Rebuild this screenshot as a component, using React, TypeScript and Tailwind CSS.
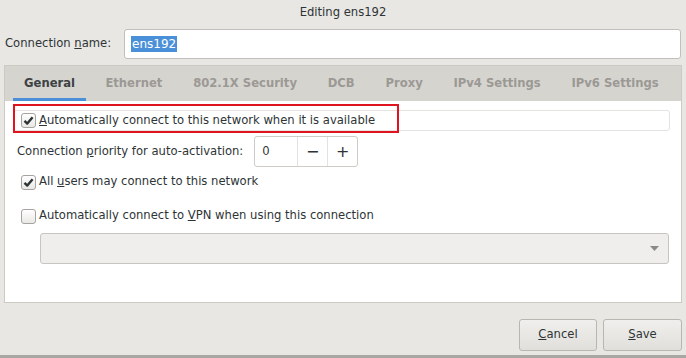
import React from "react";

function Check({ on }: { on: boolean }) {
  return (
    <span className="flex h-[15px] w-[15px] shrink-0 items-center justify-center rounded-[3px] border border-[#a7a49f] bg-gradient-to-b from-white to-[#e9e8e6]">
      {on && (
        <svg width="11" height="11" viewBox="0 0 11 11">
          <path d="M1.5 5.8 L4.3 8.6 L9.6 2.2" fill="none" stroke="#2e3436" strokeWidth="2.4" strokeLinejoin="round" />
        </svg>
      )}
    </span>
  );
}

const tabs = ["Ethernet", "802.1X Security", "DCB", "Proxy", "IPv4 Settings", "IPv6 Settings"];

export default function App() {
  return (
    <div
      className="flex h-[358px] w-[686px] flex-col border-b-[3px] border-[#a9a7a3] bg-[#e8e7e3] text-[11.6px] text-[#2e3436]"
      style={{ fontFamily: '"DejaVu Sans", sans-serif' }}
    >
      <div className="flex h-[26px] items-center justify-center text-[#2e3436]">Editing ens192</div>

      <div className="mt-[3px] flex h-[30px] items-center pl-[5px] pr-[5px]">
        <span className="w-[119px]">
          Connection <span className="underline">n</span>ame:
        </span>
        <div className="flex h-[30px] flex-1 items-center rounded-[3px] border border-[#c3c0bb] bg-white pl-[6px]">
          <span className="bg-[#4a90d9] px-[1px] text-[12px] leading-[16px] text-white">ens192</span>
        </div>
      </div>

      <div className="mx-[4px] mt-[6px] flex flex-col border border-[#cdcac4]">
        <div className="flex h-[35px] items-stretch whitespace-nowrap bg-[#d6d4cf] font-bold text-[#9b9995]">
          <div className="flex flex-col pl-[8px] pr-[4px]">
            <div className="flex flex-1 items-center border-b-[3px] border-[#4a90d9] px-[11px] pt-[3px] text-[#3d4244]">
              General
            </div>
          </div>
          {tabs.map((t) => (
            <div key={t} className="flex items-center px-[15.4px] pt-[1px]">
              {t}
            </div>
          ))}
        </div>

        <div className="relative flex h-[201px] flex-col bg-white">
          <div className="absolute left-[8px] top-[3px] h-[29px] w-[386px] border-2 border-[#e0141e]" />

          <div className="ml-[8px] mr-[11px] mt-[9px] flex h-[21px] items-center rounded-[3px] border border-[#e4e3e0] pl-[7px]">
            <Check on />
            <span className="ml-[3px]">
              <span className="underline">A</span>utomatically connect to this network when it is available
            </span>
          </div>

          <div className="ml-[12px] mt-[5px] flex h-[31px] items-center">
            <span>
              Connection <span className="underline">p</span>riority for auto-activation:
            </span>
            <div className="ml-[11px] flex h-[31px] w-[104px] rounded-[3px] border border-[#cfccc7] bg-white">
              <div className="flex w-[42px] items-center pl-[7px]">0</div>
              <div className="flex w-[30px] items-center justify-center border-l border-[#e4e2de] text-[16px]">−</div>
              <div className="flex flex-1 items-center justify-center border-l border-[#e4e2de] text-[16px]">+</div>
            </div>
          </div>

          <div className="ml-[16px] mt-[7px] flex h-[16px] items-center">
            <Check on />
            <span className="ml-[3px]">
              All <span className="underline">u</span>sers may connect to this network
            </span>
          </div>

          <div className="ml-[16px] mt-[18px] flex h-[16px] items-center">
            <Check on={false} />
            <span className="ml-[3px]">
              Automatically connect to <span className="underline">V</span>PN when using this connection
            </span>
          </div>

          <div className="ml-[35px] mr-[12px] mt-[9px] flex h-[31px] items-center justify-end rounded-[3px] border border-[#c8c5c0] bg-[#efeeec] pr-[9px]">
            <svg width="9" height="5" viewBox="0 0 9 5">
              <path d="M0 0 L9 0 L4.5 5 Z" fill="#8a8986" />
            </svg>
          </div>
        </div>
      </div>

      <div className="mt-[16px] flex justify-end gap-[6px] pr-[4px]">
        <button className="h-[32px] w-[78px] rounded-[3px] border border-[#b9b6b0] bg-gradient-to-b from-[#f0efed] to-[#e1dfdb]">
          <span className="underline">C</span>ancel
        </button>
        <button className="h-[32px] w-[79px] rounded-[3px] border border-[#b9b6b0] bg-gradient-to-b from-[#f0efed] to-[#e1dfdb]">
          <span className="underline">S</span>ave
        </button>
      </div>
    </div>
  );
}
